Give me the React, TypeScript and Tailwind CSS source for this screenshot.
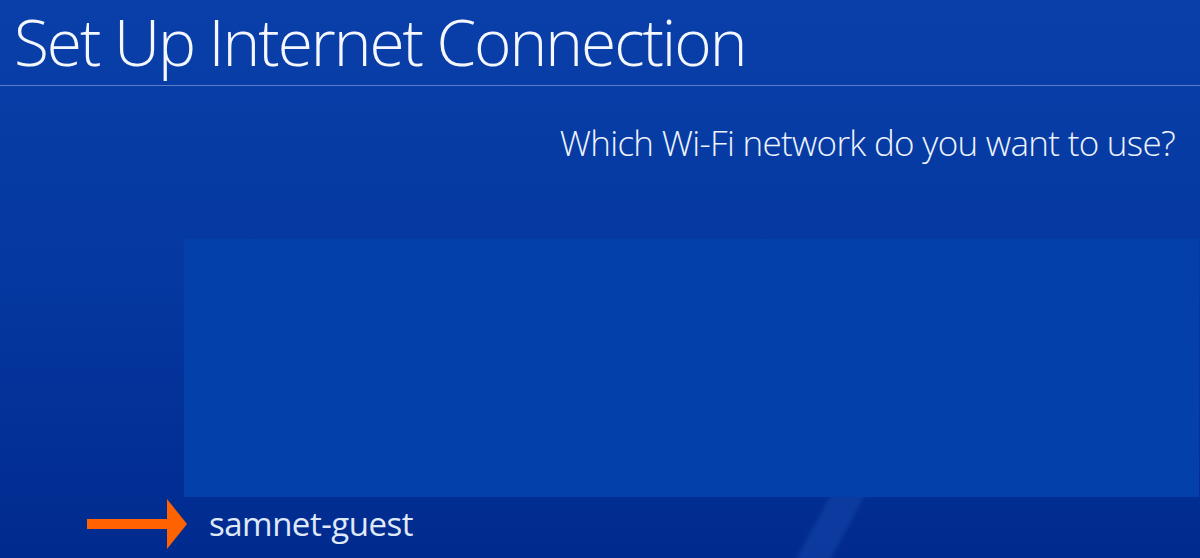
import React from 'react';

const App: React.FC = () => {
  return (
    <div
      className="relative w-[1200px] h-[558px] overflow-hidden bg-gradient-to-b from-[#0a3fa9] via-[#0538a0] to-[#012a8e] text-white"
      style={{ fontFamily: '"Open Sans", "Noto Sans", sans-serif' }}
    >
      {/* light streak at the bottom */}
      <div className="absolute left-[812px] top-[470px] w-[34px] h-[120px] bg-[#1b4fb5]/40 skew-x-[-28deg] blur-[2px]" />

      <header className="h-[86px] border-b border-[#5a7dca] pl-[14px] pt-[2px]">
        <h1 className="text-[64px] font-light leading-[80px] tracking-[-0.032em] text-[#f4f7fd]">
          Set Up Internet Connection
        </h1>
      </header>

      <div className="relative flex justify-end pr-[25px] pt-[34px]">
        <p className="text-[35px] font-light leading-[46px] tracking-[-0.02em] text-[#eef3fc]">
          Which Wi-Fi network do you want to use?
        </p>
      </div>

      <div className="relative ml-[184px] mt-[73px] h-[258px] mr-[1px] bg-[#0440aa]" />

      <div className="relative flex items-center h-[54px] pl-[87px]">
        <svg width="100" height="50" viewBox="0 0 100 50" className="shrink-0">
          <rect x="0" y="20" width="82" height="10" fill="#ff6200" />
          <polygon points="80,0 100,25 80,50" fill="#ff6200" />
        </svg>
        <span className="ml-[22px] text-[33px] leading-[44px] tracking-[-0.015em] text-[#dfe8f7]">
          samnet-guest
        </span>
      </div>
    </div>
  );
};

export default App;
